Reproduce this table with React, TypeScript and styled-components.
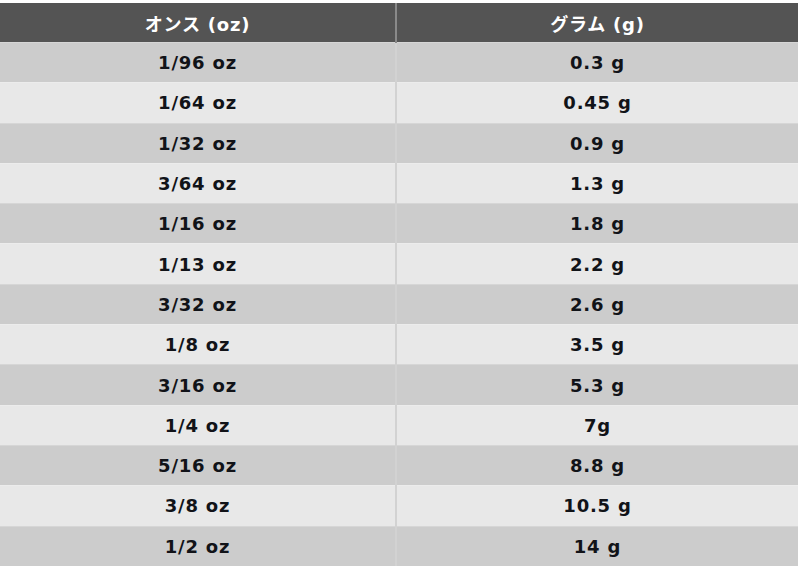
import React from "react";
import styled, { createGlobalStyle } from "styled-components";

const Global = createGlobalStyle`
  html, body { margin: 0; padding: 0; background: #ffffff; }
  body { font-family: "DejaVu Sans", "Noto Sans CJK JP", sans-serif; }
`;

const Wrap = styled.div`
  padding-top: 3px;
  width: 798px;
`;

const Table = styled.table`
  width: 100%;
  border-collapse: collapse;
  table-layout: fixed;
  font-family: "DejaVu Sans", "Noto Sans CJK JP", sans-serif;
  font-weight: bold;
  font-size: 18px;
  letter-spacing: 0.8px;
`;

const HeadCell = styled.th`
  background: #545454;
  color: #ffffff;
  height: 39px;
  padding: 0;
  text-align: center;
  font-weight: bold;
  border-left: 2px solid #8a8a8a;
  &:first-child { border-left: none; width: 395px; }
`;

const Row = styled.tr<{ $shade: boolean }>`
  background: ${(p) => (p.$shade ? "#cccccc" : "#e8e8e8")};
  border-top: 1px solid ${(p) => (p.$shade ? "#d6d6d6" : "#ececec")};
`;

const Cell = styled.td`
  height: 39.3px;
  padding: 0;
  text-align: center;
  color: #111318;
  border-left: 2px solid #d2d2d2;
  &:first-child { border-left: none; }
`;

const rows: [string, string][] = [
  ["1/96 oz", "0.3 g"],
  ["1/64 oz", "0.45 g"],
  ["1/32 oz", "0.9 g"],
  ["3/64 oz", "1.3 g"],
  ["1/16 oz", "1.8 g"],
  ["1/13 oz", "2.2 g"],
  ["3/32 oz", "2.6 g"],
  ["1/8 oz", "3.5 g"],
  ["3/16 oz", "5.3 g"],
  ["1/4 oz", "7g"],
  ["5/16 oz", "8.8 g"],
  ["3/8 oz", "10.5 g"],
  ["1/2 oz", "14 g"],
];

export default function App() {
  return (
    <Wrap>
      <Global />
      <Table>
        <thead>
          <tr>
            <HeadCell>オンス (oz)</HeadCell>
            <HeadCell>グラム (g)</HeadCell>
          </tr>
        </thead>
        <tbody>
          {rows.map(([oz, g], i) => (
            <Row key={oz} $shade={i % 2 === 0}>
              <Cell>{oz}</Cell>
              <Cell>{g}</Cell>
            </Row>
          ))}
        </tbody>
      </Table>
    </Wrap>
  );
}
